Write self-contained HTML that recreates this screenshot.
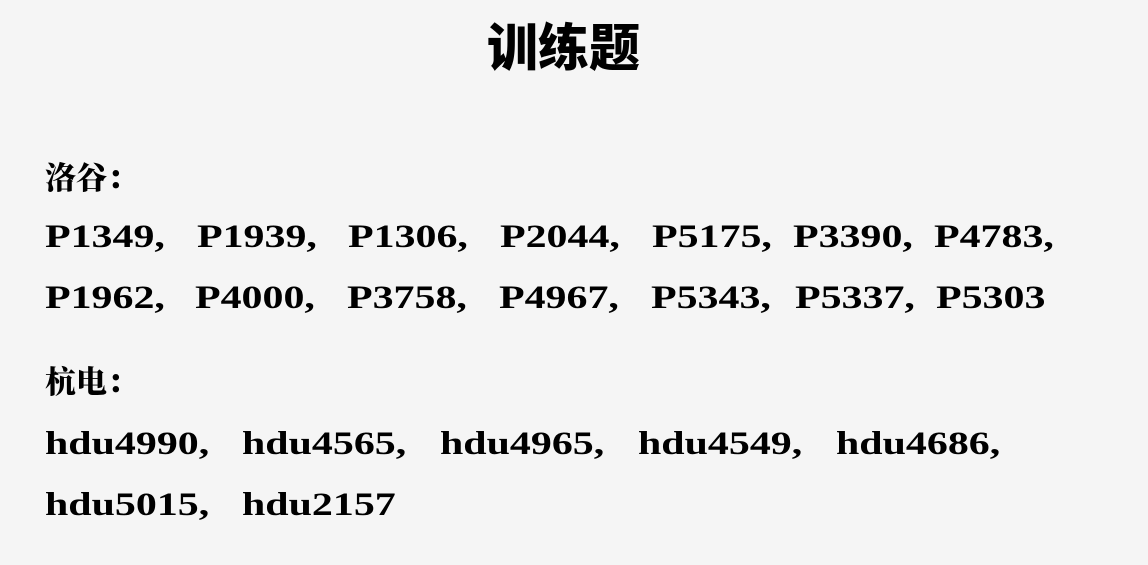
<!DOCTYPE html>
<html><head><meta charset="utf-8"><style>
html,body{margin:0;padding:0;}
body{width:1148px;height:565px;background:#f5f5f5;position:relative;overflow:hidden;color:#000;}
.t{position:absolute;left:487px;top:14px;font:900 51px "Noto Sans CJK SC",sans-serif;line-height:60px;white-space:nowrap;}
.h{position:absolute;left:45px;font-family:"Noto Serif CJK SC",serif;font-weight:900;font-size:31px;line-height:40px;white-space:nowrap;}
.k{position:absolute;font-family:"Liberation Serif",serif;font-weight:bold;font-size:33px;line-height:40px;white-space:nowrap;transform:scaleX(1.27);transform-origin:0 0;}
</style></head><body>
<div class="t">训练题</div>
<div class="h" style="top:156px">洛谷：</div>
<div style="position:absolute;left:0;top:217px;width:1148px;height:40px">
<span class="k" style="left:45px">P1349,</span>
<span class="k" style="left:197px">P1939,</span>
<span class="k" style="left:348px">P1306,</span>
<span class="k" style="left:500px">P2044,</span>
<span class="k" style="left:652px">P5175,</span>
<span class="k" style="left:793px">P3390,</span>
<span class="k" style="left:934px">P4783,</span>
</div>
<div style="position:absolute;left:0;top:278px;width:1148px;height:40px">
<span class="k" style="left:45px">P1962,</span>
<span class="k" style="left:195px">P4000,</span>
<span class="k" style="left:347px">P3758,</span>
<span class="k" style="left:499px">P4967,</span>
<span class="k" style="left:651px">P5343,</span>
<span class="k" style="left:795px">P5337,</span>
<span class="k" style="left:936px">P5303</span>
</div>
<div class="h" style="top:360px">杭电：</div>
<div style="position:absolute;left:0;top:424px;width:1148px;height:40px">
<span class="k" style="left:45px">hdu4990,</span>
<span class="k" style="left:242px">hdu4565,</span>
<span class="k" style="left:440px">hdu4965,</span>
<span class="k" style="left:638px">hdu4549,</span>
<span class="k" style="left:836px">hdu4686,</span>
</div>
<div style="position:absolute;left:0;top:485px;width:1148px;height:40px">
<span class="k" style="left:45px">hdu5015,</span>
<span class="k" style="left:242px">hdu2157</span>
</div>
</body></html>
